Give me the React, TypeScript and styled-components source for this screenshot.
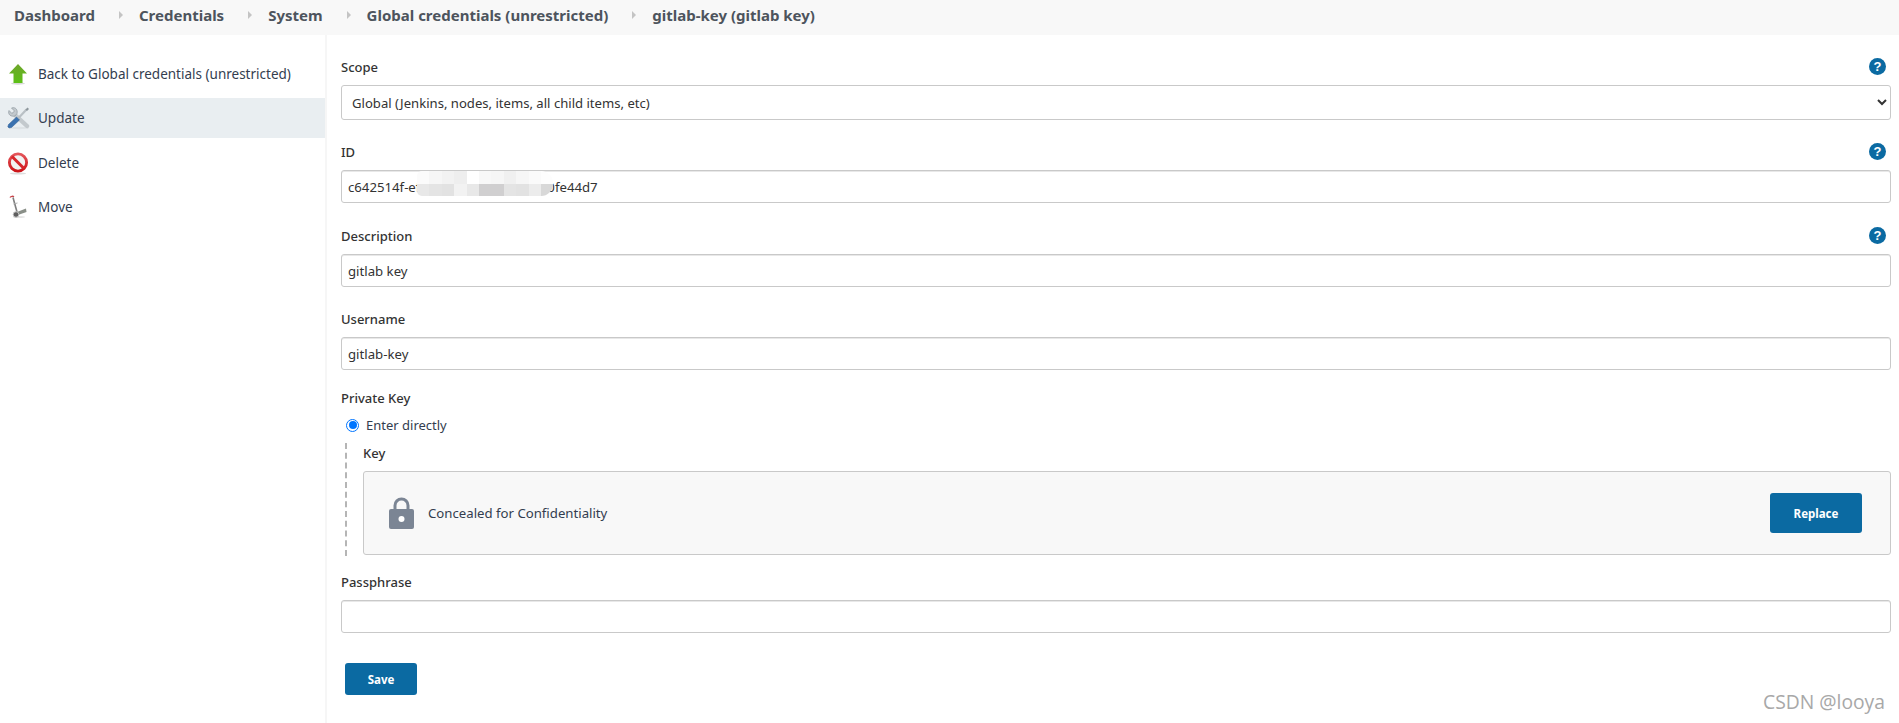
import React from "react";
import styled, { createGlobalStyle } from "styled-components";

const Global = createGlobalStyle`
  html, body { margin: 0; padding: 0; background: #fff; }
  body { font-family: "Noto Sans", "Open Sans", sans-serif; font-size: 13px; color: #333; height: 723px; overflow: hidden; }
  * { box-sizing: border-box; }
`;

const Crumbs = styled.nav`
  height: 35px; background: #f8f8f8; display: flex; align-items: center; padding: 0 0 5px 14px;
  font-size: 15px; font-weight: 700; color: #4d545d;
`;
const CrumbArrow = styled.span`
  width: 0; height: 0; margin: 0 16px 0 24px;
  border-left: 4px solid #c4c4c4; border-top: 4px solid transparent; border-bottom: 4px solid transparent;
`;
const Body = styled.div`display: flex; height: 688px;`;
const Side = styled.aside`
  width: 327px; flex: none; border-right: 2px solid #f6f6f6; padding-top: 18.5px;
`;
const SideItem = styled.div<{ $active?: boolean }>`
  height: 40px; margin-bottom: 4.5px;
  display: flex; align-items: center; gap: 8px; padding-left: 6px;
  background: ${p => (p.$active ? "#e9eef1" : "transparent")};
  font-size: 13.5px; color: #333d4f;
  svg { width: 24px; height: 24px; flex: none; }
`;
const Main = styled.main`flex: 1; padding: 22px 8px 0 14px; min-width: 0;`;
const LabelRow = styled.div`
  height: 20px; display: flex; justify-content: space-between; align-items: center;
  font-size: 13px; font-weight: 500; color: #333; margin-bottom: 8px;
`;
const Field = styled.div<{ $gap: number }>`margin-bottom: ${p => p.$gap}px; position: relative;`;
const Help = styled.span`
  width: 17px; height: 17px; border-radius: 50%; background: #0b6aa2; color: #fff;
  display: flex; align-items: center; justify-content: center; margin: 0 5px 2px 0;
  font: 700 13px "Liberation Sans", sans-serif;
`;
const TextInput = styled.input`
  display: block; width: 100%; height: 33px; border: 1px solid #c9c9c9; border-radius: 3px;
  padding: 0 6px; font: 13.2px "Noto Sans", sans-serif; color: #333; background: #fff; outline: none;
  box-shadow: inset 0 1px 0 #e8e8e8;
`;
const Select = styled.select`
  display: block; width: 100%; height: 35px; border: 1px solid #c9c9c9; border-radius: 3px;
  padding: 0 2px 0 6px; font: 13.1px "Noto Sans", sans-serif; color: #333; background: #fff; outline: none;
`;
const Mosaic = styled.div`
  position: absolute; left: 76px; top: 1px; width: 136px; height: 25px; border-radius: 5px 12px 12px 5px;
  overflow: hidden; display: grid; grid-template-columns: repeat(11, 12.4px); grid-template-rows: 12.5px 12.5px;
`;
const MosaicCell = styled.span<{ $c: string }>`background: ${p => p.$c};`;
const IdWrap = styled.div`position: relative;`;
const RadioRow = styled.label`
  display: flex; align-items: center; gap: 7px; height: 20px; margin: -1px 0 0 5px; font-size: 13px; color: #333d4f;
`;
const Radio = styled.span`
  width: 13px; height: 13px; border-radius: 50%; border: 1.5px solid #0075ff; background: #fff; position: relative; flex: none;
  &::after { content: ""; position: absolute; inset: 1.5px; border-radius: 50%; background: #0075ff; }
`;
const Nested = styled.div`
  margin: 8px 0 16px 4px; padding: 0 0 0 16px; border-left: 2px dashed #b5b5b5; height: 113px;
`;
const KeyLabel = styled.div`height: 20px; line-height: 20px; margin: 1px 0 8px; font-weight: 500; font-size: 13px;`;
const KeyBox = styled.div`
  height: 84px; background: #f8f8f8; border: 1px solid #c9c9c9; border-radius: 3px;
  display: flex; align-items: center; padding: 0 28px 0 25px;
`;
const Concealed = styled.span`flex: 1; margin-left: 14px; font-size: 13.2px; color: #333d4f;`;
const Button = styled.button<{ $w: number; $h: number }>`
  width: ${p => p.$w}px; height: ${p => p.$h}px; border: 0; border-radius: 3px; background: #0b6aa2; color: #fff;
  font: 700 11.5px "Noto Sans", sans-serif; padding: 0;
`;
const SaveRow = styled.div`padding: 30px 0 0 4px;`;
const Mark = styled.div`
  position: absolute; right: 14px; bottom: 8px; font: 19.3px "Open Sans", "Noto Sans", sans-serif; color: #a8a8a8;
`;

const mosaic = ["#fbfbfb","#f6f6f6","#f2f2f2","#eeeeee","#ffffff","#f8f8f8","#f6f6f6","#f0f0f0","#f6f6f6","#fafafa","#fdfdfd",
  "#e8e8e8","#e4e4e4","#e2e2e2","#f2f2f2","#e8e8e8","#d0cfd0","#d0cfd0","#e4e4e4","#e2e2e2","#ececec","#d8d8d8"];

const ArrowUp = () => (
  <svg viewBox="0 0 24 24">
    <defs>
      <linearGradient id="ag" x1="0" y1="0" x2="0" y2="1">
        <stop offset="0" stopColor="#6fa52c" />
        <stop offset="1" stopColor="#5cc016" />
      </linearGradient>
    </defs>
    <ellipse cx="12" cy="21.5" rx="7" ry="1.2" fill="#d8d8d8" />
    <path d="M12 2 21 11.5H16.5V21H7.5V11.5H3Z" fill="url(#ag)" />
  </svg>
);
const Tools = () => (
  <svg viewBox="0 0 24 24">
    <ellipse cx="13" cy="22" rx="10" ry="1.2" fill="#dde2e5" />
    <path d="M8 8 21 20" stroke="#c3c9cd" strokeWidth="4.4" strokeLinecap="round" />
    <path d="M3 4.5 6 7.5 8.5 5 5.5 2C9.5.5 12 4 11 7.5L9 10C5 11 1.5 8.5 3 4.5Z" fill="#c3c9cd" stroke="#8f99a1" strokeWidth=".7" />
    <path d="M12.5 12 20.5 3.5" stroke="#b9c0c5" strokeWidth="2.2" />
    <path d="M21.5 1.5 23 3 21 5 19.5 3.5Z" fill="#8e979d" />
    <path d="M3 22 1.8 20.8 2.5 18.5 10.5 11 13.5 14 5.5 21.5Z" fill="#3a72b0" stroke="#2c5a8e" strokeWidth=".5" />
  </svg>
);
const Stop = () => (
  <svg viewBox="0 0 24 24">
    <defs>
      <linearGradient id="sg" x1="0" y1="0" x2="0" y2="1">
        <stop offset="0" stopColor="#e4555a" />
        <stop offset="1" stopColor="#cc1419" />
      </linearGradient>
    </defs>
    <ellipse cx="12" cy="22.5" rx="8" ry="1" fill="#ddd" />
    <circle cx="12" cy="11.5" r="8.6" fill="#f2f2f2" stroke="url(#sg)" strokeWidth="2.9" />
    <path d="M6 5.5 18 17.5" stroke="#d7262b" strokeWidth="3" />
  </svg>
);
const Trolley = () => (
  <svg viewBox="0 0 24 24">
    <path d="M4 2.5C5 1 7 1 8 1.8" stroke="#c9454a" strokeWidth="1.3" fill="none" />
    <path d="M7 2.5 11 17" stroke="#7f7f7f" strokeWidth="1.6" fill="none" />
    <path d="M7.4 9 11.5 8" stroke="#b0b0b0" strokeWidth="1" fill="none" />
    <path d="M11 17 20 13.5 20.5 17 12 20Z" fill="#8a8f88" />
    <ellipse cx="13" cy="22" rx="6" ry="1" fill="#e4e4e4" />
    <circle cx="10" cy="19.5" r="2.8" fill="#5f5f5f" stroke="#c4c4c4" strokeWidth="1" />
  </svg>
);
const Lock = () => (
  <svg width="25" height="32" viewBox="0 0 25 32">
    <path d="M6 14V8.5a6.5 6.5 0 0 1 13 0V14" fill="none" stroke="#7b8594" strokeWidth="3" />
    <rect x="0" y="12" width="25" height="20" rx="2" fill="#7b8594" />
    <circle cx="12.5" cy="22" r="3" fill="#fff" />
  </svg>
);

export default function App() {
  return (
    <>
      <Global />
      <Crumbs>
        <span>Dashboard</span><CrumbArrow />
        <span>Credentials</span><CrumbArrow />
        <span>System</span><CrumbArrow />
        <span>Global credentials (unrestricted)</span><CrumbArrow />
        <span>gitlab-key (gitlab key)</span>
      </Crumbs>
      <Body>
        <Side>
          <SideItem><ArrowUp />Back to Global credentials (unrestricted)</SideItem>
          <SideItem $active><Tools />Update</SideItem>
          <SideItem><Stop />Delete</SideItem>
          <SideItem><Trolley />Move</SideItem>
        </Side>
        <Main>
          <Field $gap={22}>
            <LabelRow>Scope<Help>?</Help></LabelRow>
            <Select defaultValue="g"><option value="g">Global (Jenkins, nodes, items, all child items, etc)</option></Select>
          </Field>
          <Field $gap={23}>
            <LabelRow>ID<Help>?</Help></LabelRow>
            <IdWrap>
              <TextInput defaultValue="c642514f-efc00000000000000000fe44d7" readOnly />
              <Mosaic>{mosaic.map((c, i) => <MosaicCell key={i} $c={c} />)}</Mosaic>
            </IdWrap>
          </Field>
          <Field $gap={22}>
            <LabelRow>Description<Help>?</Help></LabelRow>
            <TextInput defaultValue="gitlab key" readOnly />
          </Field>
          <Field $gap={18}>
            <LabelRow>Username</LabelRow>
            <TextInput defaultValue="gitlab-key" readOnly />
          </Field>
          <LabelRow>Private Key</LabelRow>
          <RadioRow><Radio />Enter directly</RadioRow>
          <Nested>
            <KeyLabel>Key</KeyLabel>
            <KeyBox>
              <Lock />
              <Concealed>Concealed for Confidentiality</Concealed>
              <Button $w={92} $h={40}>Replace</Button>
            </KeyBox>
          </Nested>
          <LabelRow>Passphrase</LabelRow>
          <TextInput readOnly />
          <SaveRow><Button $w={72} $h={32}>Save</Button></SaveRow>
        </Main>
      </Body>
      <Mark>CSDN @looya</Mark>
    </>
  );
}
